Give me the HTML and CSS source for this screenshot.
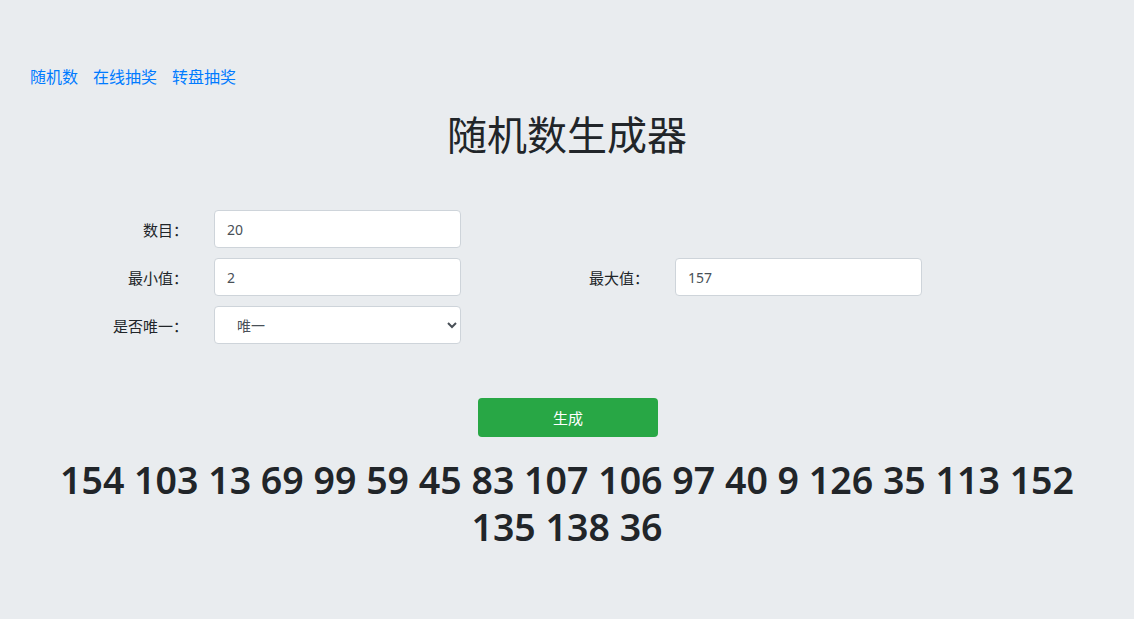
FILE: index.html
```html
<!DOCTYPE html>
<html lang="zh">
<head>
<meta charset="utf-8">
<title>随机数生成器</title>
<link rel="stylesheet" href="styles.css">
</head>
<body>
<nav class="nav">
  <a href="#">随机数</a>
  <a href="#">在线抽奖</a>
  <a href="#">转盘抽奖</a>
</nav>
<h1 class="title">随机数生成器</h1>
<form class="form">
  <label class="lbl">数目：</label>
  <input class="ctl" type="text" value="20">
  <span></span><span></span>
  <label class="lbl">最小值：</label>
  <input class="ctl" type="text" value="2">
  <label class="lbl">最大值：</label>
  <input class="ctl" type="text" value="157">
  <label class="lbl">是否唯一：</label>
  <select class="ctl sel"><option>唯一</option></select>
</form>
<div class="actions"><button class="btn" type="button">生成</button></div>
<div class="result">154 103 13 69 99 59 45 83 107 106 97 40 9 126 35 113 152 135 138 36</div>
</body>
</html>
```
FILE: styles.css
```css
html, body {
  margin: 0;
  padding: 0;
  background: #e9ecef;
  color: #212529;
  font-family: "Noto Sans", "Noto Sans CJK SC", sans-serif;
  height: 100%;
}
.nav {
  padding: 65px 0 0 30px;
  display: flex;
  gap: 15px;
  font-size: 16px;
  line-height: 24px;
}
.nav a {
  color: #007bff;
  text-decoration: none;
}
.title {
  margin: 22px 0 0;
  text-align: center;
  font-size: 40px;
  line-height: 48px;
  font-weight: 400;
}
.form {
  margin-top: 51px;
  display: grid;
  grid-template-columns: 214px 247px 214px 247px;
  grid-auto-rows: 38px;
  row-gap: 10px;
}
.lbl {
  font-size: 15px;
  text-align: right;
  padding-right: 26px;
  align-self: center;
}
.ctl {
  box-sizing: border-box;
  height: 38px;
  width: 247px;
  border: 1px solid #ced4da;
  border-radius: 4px;
  background: #fff;
  padding: 0 12px;
  font-family: inherit;
  font-size: 14px;
  color: #495057;
}
.sel {
  padding-left: 18px;
}
.actions {
  margin-top: 54px;
  display: flex;
  justify-content: center;
}
.btn {
  width: 180px;
  height: 39px;
  margin-left: 2px;
  background: #28a745;
  border: none;
  border-radius: 4px;
  color: #fff;
  font-family: inherit;
  font-size: 15px;
}
.result {
  margin-top: 19px;
  text-align: center;
  font-size: 37.5px;
  line-height: 47px;
  font-weight: 600;
  padding: 0 40px;
}
```
